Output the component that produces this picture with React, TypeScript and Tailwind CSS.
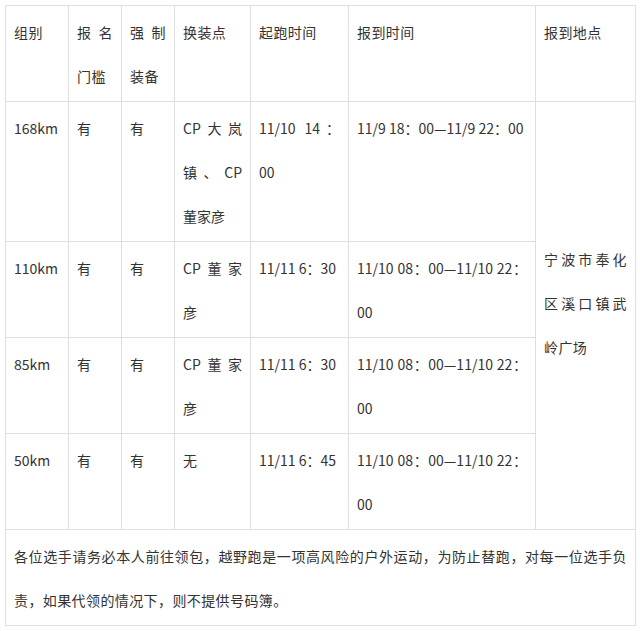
import React from "react";

const td = "border border-[#dfdfdf] px-[8px] pt-[4px] pb-[3px] align-top text-justify";
const tdc = td + " tracking-[0.4px]";

export default function App() {
  return (
    <div
      className="w-[640px] h-[631px] bg-white p-[5px] text-[#333] text-[14px] leading-[44px]"
      style={{ fontFamily: '"Noto Sans CJK SC", "Noto Sans", sans-serif' }}
    >
      <table className="w-[630px] table-fixed border-collapse">
        <colgroup>
          <col className="w-[63px]" />
          <col className="w-[53px]" />
          <col className="w-[53px]" />
          <col className="w-[76px]" />
          <col className="w-[98px]" />
          <col className="w-[187px]" />
          <col className="w-[100px]" />
        </colgroup>
        <tbody>
          <tr>
            <td className={tdc}>组别</td>
            <td className={tdc}>报名门槛</td>
            <td className={tdc}>强制装备</td>
            <td className={tdc}>换装点</td>
            <td className={tdc}>起跑时间</td>
            <td className={tdc}>报到时间</td>
            <td className={tdc}>报到地点</td>
          </tr>
          <tr>
            <td className={td}>168km</td>
            <td className={tdc}>有</td>
            <td className={tdc}>有</td>
            <td className={td}>CP大岚镇、CP董家彦</td>
            <td className={td}>11/10 14：00</td>
            <td className={td}>11/9 18：00—11/9 22：00</td>
            <td
              rowSpan={4}
              className="border border-[#dfdfdf] px-[8px] pt-[4px] pb-[30px] align-middle text-justify tracking-[0.4px]"
            >
              宁波市奉化区溪口镇武岭广场
            </td>
          </tr>
          <tr>
            <td className={td}>110km</td>
            <td className={tdc}>有</td>
            <td className={tdc}>有</td>
            <td className={td}>CP董家彦</td>
            <td className={td}>11/11 6：30</td>
            <td className={td}>11/10 08：00—11/10 22：00</td>
          </tr>
          <tr>
            <td className={td}>85km</td>
            <td className={tdc}>有</td>
            <td className={tdc}>有</td>
            <td className={td}>CP董家彦</td>
            <td className={td}>11/11 6：30</td>
            <td className={td}>11/10 08：00—11/10 22：00</td>
          </tr>
          <tr>
            <td className={td}>50km</td>
            <td className={tdc}>有</td>
            <td className={tdc}>有</td>
            <td className={tdc}>无</td>
            <td className={td}>11/11 6：45</td>
            <td className={td}>11/10 08：00—11/10 22：00</td>
          </tr>
          <tr>
            <td colSpan={7} className={tdc}>
              各位选手请务必本人前往领包，越野跑是一项高风险的户外运动，为防止替跑，对每一位选手负责，如果代领的情况下，则不提供号码簿。
            </td>
          </tr>
        </tbody>
      </table>
    </div>
  );
}
